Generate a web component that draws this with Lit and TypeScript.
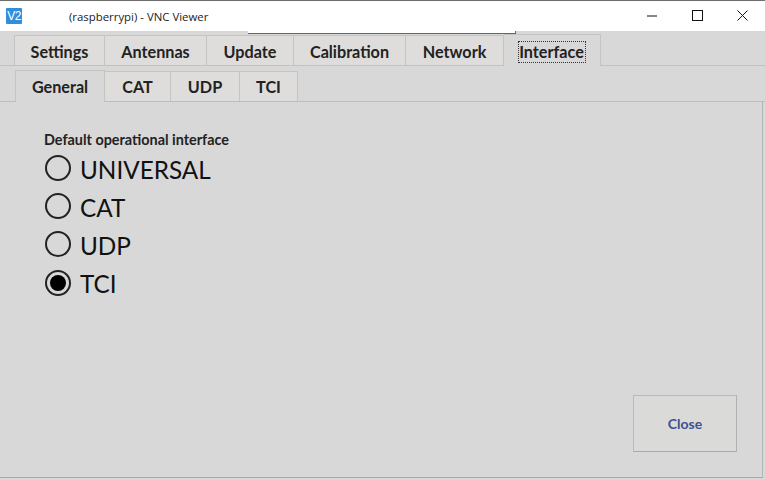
import { LitElement, html, css } from "lit";
import { customElement } from "lit/decorators.js";

const top = [["Settings", 91], ["Antennas", 102], ["Update", 87], ["Calibration", 112], ["Network", 98], ["Interface", 97]];
const sub = [["General", 90], ["CAT", 66], ["UDP", 69], ["TCI", 58]];
const radios = ["UNIVERSAL", "CAT", "UDP", "TCI"];

@customElement("app-root")
export class AppRoot extends LitElement {
  static styles = css`
    :host { display: block; width: 765px; height: 480px; overflow: hidden; background: #d8d8d8; font-family: Lato, "Liberation Sans", sans-serif; color: #111; }
    .title { height: 30px; border-top: 1px solid #6e6e6e; background: #fff; display: flex; align-items: center; position: relative; }
    .logo { width: 16px; height: 16px; margin-left: 6px; background: #2f8fdc; color: #fff; font: 400 12px/16px "Liberation Sans", sans-serif; text-align: center; border-radius: 1px; letter-spacing: -0.5px; }
    .cap { margin-left: 47px; color: #222; font-family: "Open Sans", sans-serif; font-size: 11.4px; }
    .ctl { position: absolute; top: 0; right: 0; display: flex; }
    .ctl svg { display: block; width: 45px; height: 30px; }
    .notch { position: absolute; left: 248px; top: 30px; width: 267px; height: 2px; background: #fff; border-bottom: 1px solid #666; border-right: 1px solid #666; }
    .row1 { display: flex; padding: 4px 0 0 14px; height: 30px; border-bottom: 1px solid #c2c2bf; }
    .row2 { display: flex; padding: 5px 0 0 15px; height: 30px; border-bottom: 1px solid #bdbdba; }
    .tab { box-sizing: border-box; height: 30px; display: flex; align-items: center; justify-content: center; background: #dedddb; font-size: 16.2px; font-weight: 700; color: #222; border: 1px solid #c4c4c0; border-left: 0; border-bottom: 0; }
    .row1 .tab { padding-top: 2px; }
    .tab:first-child { border-left: 1px solid #c4c4c0; }
    .tab.on { background: #d8d8d8; height: 32px; margin: -1px 0 -1px; position: relative; }
    .focus { outline: 1px dotted #333; line-height: 20px; padding: 0 1px 0 0; }
    .panel { height: 376px; width: 763px; box-sizing: border-box; border-right: 1px solid #b5b5b2; border-bottom: 1px solid #a9a9a6; padding: 29px 0 0 44px; position: relative; }
    .lbl { font-size: 14.4px; font-weight: 700; line-height: 18px; color: #222; margin-bottom: 1px; }
    .radio { display: flex; align-items: center; height: 38.2px; font-size: 24.3px; color: #111; }
    .dot { width: 26px; height: 26px; box-sizing: border-box; border: 2px solid #222; border-radius: 50%; background: transparent; margin: 0 9px 2px 1px; display: flex; align-items: center; justify-content: center; }
    .dot.on::after { content: ""; width: 16px; height: 16px; border-radius: 50%; background: #000; }
    .close { position: absolute; left: 633px; top: 293px; width: 104px; height: 57px; box-sizing: border-box; background: #dadad9; border: 1px solid #b9b9b5; border-bottom-color: #a8a8a4; border-right-color: #b0b0ac; display: flex; align-items: center; justify-content: center; color: #3f4f8f; font-weight: 700; font-size: 14px; font-family: Lato, sans-serif; padding: 0; }
  `;

  render() {
    return html`
      <div class="title">
        <div class="logo">V2</div>
        <div class="cap">(raspberrypi) - VNC Viewer</div>
        <div class="ctl">
          <svg viewBox="0 0 45 30"><path d="M17 15h10" stroke="#111" fill="none"/></svg>
          <svg viewBox="0 0 45 30"><rect x="17.5" y="9.5" width="10" height="10" stroke="#111" fill="none"/></svg>
          <svg viewBox="0 0 45 30"><path d="M17.5 9.5l10 10M27.5 9.5l-10 10" stroke="#111" fill="none"/></svg>
        </div>
        <div class="notch"></div>
      </div>
      <div class="row1">
        ${top.map(([t, w], i) => html`<div class="tab ${i === 5 ? "on" : ""}" style="width:${w}px">${i === 5 ? html`<span class="focus">${t}</span>` : t}</div>`)}
      </div>
      <div class="row2">
        ${sub.map(([t, w], i) => html`<div class="tab ${i === 0 ? "on" : ""}" style="width:${w}px">${t}</div>`)}
      </div>
      <div class="panel">
        <div class="lbl">Default operational interface</div>
        ${radios.map((r, i) => html`<div class="radio"><span class="dot ${i === 3 ? "on" : ""}"></span>${r}</div>`)}
        <button class="close">Close</button>
      </div>
    `;
  }
}
